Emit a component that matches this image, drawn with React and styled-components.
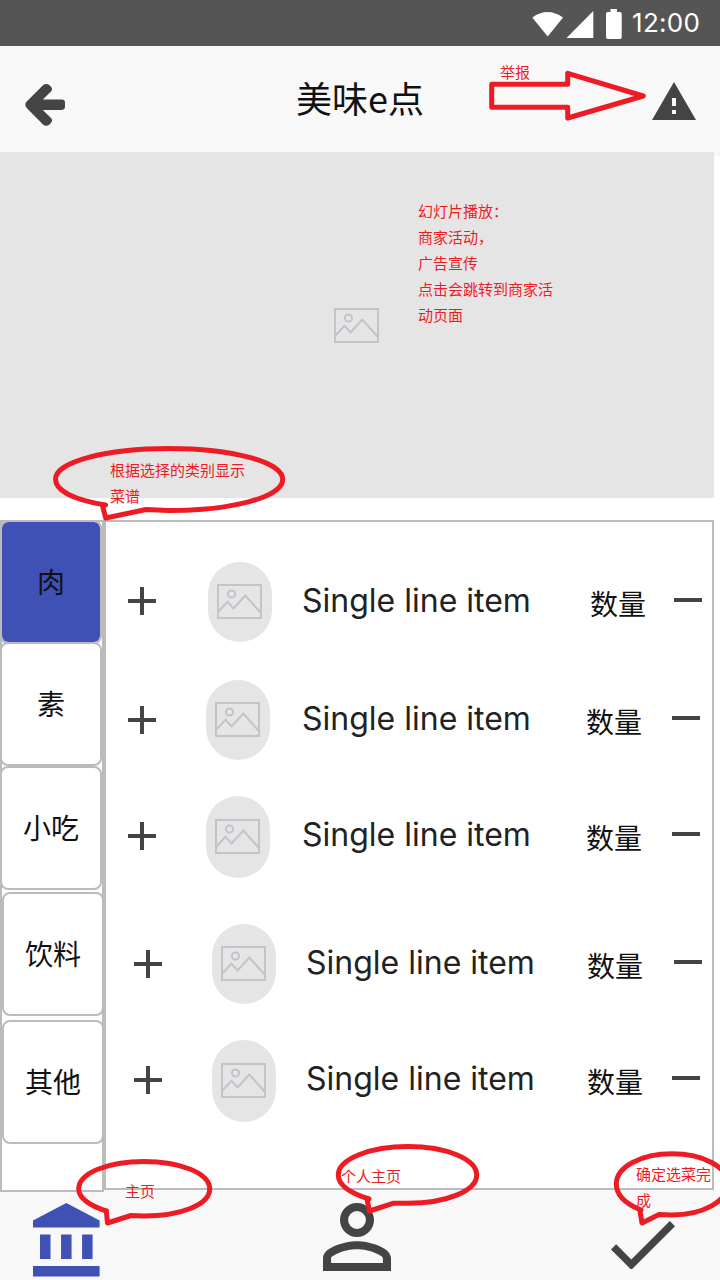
import React from "react";
import styled, { createGlobalStyle } from "styled-components";

const GlobalStyle = createGlobalStyle`
  * { box-sizing: border-box; }
  body { margin: 0; background: #fff; }
`;

const Screen = styled.div`
  position: relative;
  display: flex;
  flex-direction: column;
  width: 720px;
  height: 1280px;
  overflow: hidden;
  background: #fff;
  color: #111;
  font-family: Inter, "Noto Sans CJK SC", sans-serif;
`;

const StatusBar = styled.div`
  display: flex;
  flex: none;
  align-items: center;
  justify-content: flex-end;
  height: 46px;
  padding-right: 20px;
  background: #555;
  color: #fff;
`;

const StatusIcons = styled.svg`
  width: 92px;
  height: 46px;
  margin-right: 9px;
  fill: #fff;
`;

const Clock = styled.span`
  width: 68px;
  font-size: 26px;
  line-height: 46px;
  letter-spacing: 0.3px;
  white-space: nowrap;
`;

const Header = styled.header`
  display: grid;
  flex: none;
  grid-template-columns: 44px 1fr 44px;
  height: 110px;
  padding: 0 24px;
  background: #f8f8f8;
`;

const BackIcon = styled.svg`
  width: 44px;
  height: 46px;
  margin-top: 36px;
  fill: #444;
`;

const Title = styled.h1`
  margin: 0;
  font-family: "Noto Sans CJK SC", sans-serif;
  font-size: 36px;
  font-weight: 400;
  line-height: 52px;
  padding-top: 25px;
  text-align: center;
`;

const WarningIcon = styled.svg`
  width: 44px;
  height: 38px;
  margin-top: 36px;
  fill: #444;
`;

const Banner = styled.section`
  display: flex;
  flex: none;
  align-items: center;
  justify-content: center;
  width: 714px;
  height: 346px;
  margin-top: -4px;
  margin-bottom: 22px;
  padding-right: 1px;
  background: #e5e5e5;
`;

const Placeholder = styled.svg`
  display: block;
  width: 45px;
  height: 35px;
  fill: none;
  stroke: #c0c4cb;
  stroke-width: 2;
`;

const Content = styled.main`
  position: relative;
  z-index: 1;
  display: flex;
  flex: none;
  align-items: flex-start;
  width: 714px;
  height: 670px;
`;

const Sidebar = styled.nav`
  display: flex;
  flex: none;
  flex-direction: column;
  width: 104px;
  height: 672px;
  border: 2px solid #bbb;
  background: #fff;
`;

const Category = styled.button`
  flex: none;
  width: 102px;
  height: 124px;
  margin: ${(p) => p.$gap}px 0 0 ${(p) => p.$shift}px;
  padding: 0 0 2px;
  border: 2px solid #bbb;
  border-radius: 8px;
  background: ${(p) => (p.$active ? "#3f51b5" : "#fff")};
  background-clip: padding-box;
  color: #111;
  font-family: "Noto Sans CJK SC", sans-serif;
  font-size: 28px;
  line-height: 40px;
`;

const Dishes = styled.section`
  display: flex;
  flex: 1;
  flex-direction: column;
  height: 670px;
  padding-top: 40px;
  border: 2px solid #bbb;
  background: #fff;
`;

const Row = styled.div`
  display: grid;
  flex: none;
  align-items: start;
  grid-template-columns: ${(p) => p.$columns};
  height: ${(p) => p.$height}px;
  padding-left: ${(p) => p.$indent}px;
`;

const Sign = styled.svg`
  display: block;
  width: 28px;
  height: 28px;
  margin-top: ${(p) => p.$top}px;
  fill: #444;
`;

const Avatar = styled.div`
  display: flex;
  align-items: center;
  justify-content: center;
  width: 64px;
  height: ${(p) => p.$tall}px;
  padding-bottom: 1px;
  padding-right: 1px;
  border-radius: 32px;
  background: #e5e5e5;
`;

const DishName = styled.span`
  margin-top: 19px;
  color: #222;
  font-size: 32px;
  line-height: 40px;
  white-space: nowrap;
`;

const Quantity = styled.span`
  margin-top: 21px;
  font-family: "Noto Sans CJK SC", sans-serif;
  font-size: 28px;
  line-height: 40px;
`;

const Footer = styled.footer`
  display: flex;
  flex: 1;
  align-items: flex-start;
  padding: 13px 0 0 33px;
  background: #f8f8f8;
`;

const TabIcon = styled.svg`
  display: block;
  flex: none;
  width: ${(p) => p.$w}px;
  height: ${(p) => p.$h}px;
  margin: ${(p) => p.$top || 0}px ${(p) => p.$gap || 0}px 0 0;
  fill: ${(p) => (p.$active ? "#3f51b5" : "#444")};
`;

const Markup = styled.svg`
  position: absolute;
  z-index: 2;
  inset: 0;
  width: 720px;
  height: 1280px;
  fill: none;
  stroke: #ed1c24;
  stroke-width: 5;
  stroke-linejoin: round;
  stroke-linecap: round;
  pointer-events: none;
`;

const Note = styled.p`
  position: absolute;
  z-index: 3;
  left: ${(p) => p.$x}px;
  top: ${(p) => p.$y}px;
  margin: 0;
  color: #ed1c24;
  font-family: "Noto Sans CJK SC", sans-serif;
  font-size: 15px;
  font-weight: 400;
  line-height: 26px;
  white-space: pre;
`;

const categories = [
  { name: "肉", gap: -2, shift: -2, active: true },
  { name: "素", gap: -2, shift: -2 },
  { name: "小吃", gap: 0, shift: -2 },
  { name: "饮料", gap: 2, shift: 0 },
  { name: "其他", gap: 4, shift: 0 },
];

const dishes = [
  { indent: 22, columns: "80px 94px 288px 84px 28px", height: 118, tall: 80, plusTop: 25 },
  { indent: 22, columns: "78px 96px 284px 86px 28px", height: 116, tall: 80, plusTop: 26 },
  { indent: 22, columns: "78px 96px 284px 86px 28px", height: 128, tall: 82, plusTop: 26 },
  { indent: 28, columns: "78px 94px 281px 87px 28px", height: 116, tall: 80, plusTop: 26 },
  { indent: 28, columns: "78px 94px 281px 85px 28px", height: 116, tall: 82, plusTop: 26 },
];

function ImagePlaceholder() {
  return (
    <Placeholder viewBox="0 0 45 35">
      <rect x="1" y="1" width="43" height="33" />
      <circle cx="14.5" cy="10" r="3.6" />
      <path d="M1 28L10.5 17.7 16.5 24.5 28.3 11.5 44 29" />
    </Placeholder>
  );
}

export default function App() {
  return (
    <Screen>
      <GlobalStyle />
      <StatusBar>
        <StatusIcons viewBox="531 0 92 46">
          <path d="M532.3 17.5Q547.5 6.5 563 17.5L547.7 36.5Z" />
          <path d="M593.3 11V38H566.5Z" />
          <path d="M610.5 9h6.5v3h3q1.7 0 1.7 1.7v23.6q0 1.7-1.7 1.7h-12.3q-1.7 0-1.7-1.7v-23.6q0-1.7 1.7-1.7h2.8z" />
        </StatusIcons>
        <Clock>12:00</Clock>
      </StatusBar>

      <Header>
        <BackIcon viewBox="24 82 44 46">
          <path d="M42.8 99.5L51 91.5Q53.2 88.9 50.8 86.5L49.5 85.2Q46.2 82.6 43 85.2L26.7 101.5Q23.9 104.7 26.7 107.9L43 124.4Q46.2 127 49.5 124.4L50.8 123.1Q53.2 120.6 51 118L42.8 109.9H61.8Q65 109.9 65 106.6V102.8Q65 99.5 61.8 99.5Z" />
        </BackIcon>
        <Title>美味e点</Title>
        <WarningIcon viewBox="1 2 22 19">
          <path d="M1 21h22L12 2 1 21zm12-3h-2v-2h2v2zm0-4h-2v-4h2v4z" />
        </WarningIcon>
      </Header>

      <Banner>
        <ImagePlaceholder />
      </Banner>

      <Content>
        <Sidebar>
          {categories.map((c) => (
            <Category key={c.name} $gap={c.gap} $shift={c.shift} $active={c.active}>
              {c.name}
            </Category>
          ))}
        </Sidebar>
        <Dishes>
          {dishes.map((d, i) => (
            <Row key={i} $indent={d.indent} $columns={d.columns} $height={d.height}>
              <Sign $top={d.plusTop} viewBox="0 0 28 28">
                <path d="M12 0h4v12h12v4H16v12h-4V16H0v-4h12z" />
              </Sign>
              <Avatar $tall={d.tall}>
                <ImagePlaceholder />
              </Avatar>
              <DishName>Single line item</DishName>
              <Quantity>数量</Quantity>
              <Sign $top={24} viewBox="0 0 28 28">
                <path d="M0 12h28v4H0z" />
              </Sign>
            </Row>
          ))}
        </Dishes>
      </Content>

      <Footer>
        <TabIcon $active $w={66.6} $h={73.6} $gap={223.4} viewBox="2 1 19 21">
          <path d="M4 10v7h3v-7H4zm6 0v7h3v-7h-3zM2 22h19v-3H2v3zm14-12v7h3v-7h-3zm-4.5-9L2 6v2h19V6l-9.5-5z" />
        </TabIcon>
        <TabIcon $w={68} $h={68} $gap={220} viewBox="4 4 16 16">
          <path d="M12 5.9a2.1 2.1 0 1 1 0 4.2 2.1 2.1 0 0 1 0-4.2m0 9c2.97 0 6.1 1.46 6.1 2.1v1.1H5.9V17c0-.64 3.13-2.1 6.1-2.1M12 4C9.79 4 8 5.79 8 8s1.79 4 4 4 4-1.79 4-4-1.79-4-4-4zm0 9c-2.67 0-8 1.34-8 4v3h16v-3c0-2.66-5.33-4-8-4z" />
        </TabIcon>
        <TabIcon $w={64} $h={48.8} $top={17.5} viewBox="3.41 5.59 17.59 13.41">
          <path d="M9 16.17L4.83 12l-1.42 1.41L9 19 21 7l-1.41-1.41z" />
        </TabIcon>
      </Footer>

      <Markup viewBox="0 0 720 1280">
        <path d="M491.7 84.3H567.7V73.3L643.3 96 567.7 118V107.3H491.7Z" />
        <path d="M105.5 505C75 500 55.5 491 55.5 479 55.5 462 106 448.5 169 448.5S282.7 462 282.7 479.5 232 510.5 169 510.5L146 509.5 105.7 518 102.3 505" />
        <path d="M106.5 1211C90 1206 78.7 1198 78.7 1189 78.7 1173 108 1161.5 144 1161.5S209.7 1173 209.7 1189 180 1216 144 1216L131 1215.5 107.5 1223 106.3 1211" />
        <path d="M369 1199C350 1193 338.3 1185 338.3 1175 338.3 1159 370 1146.5 408 1146.5S476.7 1159 476.7 1175 446 1203.3 408 1203.3H393L369.5 1211 367 1199" />
        <path d="M641 1210C626 1204 616.3 1195 616.3 1184 616.3 1167 641 1153.7 672 1153.7S728 1167 728 1184 703 1215 672 1215L659 1214.5 642 1223 640 1211" />
      </Markup>
      <Note $x={500} $y={59}>举报</Note>
      <Note $x={418} $y={198}>{"幻灯片播放：\n商家活动，\n广告宣传\n点击会跳转到商家活\n动页面"}</Note>
      <Note $x={110} $y={457}>{"根据选择的类别显示\n菜谱"}</Note>
      <Note $x={125} $y={1178}>主页</Note>
      <Note $x={341} $y={1163}>个人主页</Note>
      <Note $x={636} $y={1161}>{"确定选菜完\n成"}</Note>
    </Screen>
  );
}
